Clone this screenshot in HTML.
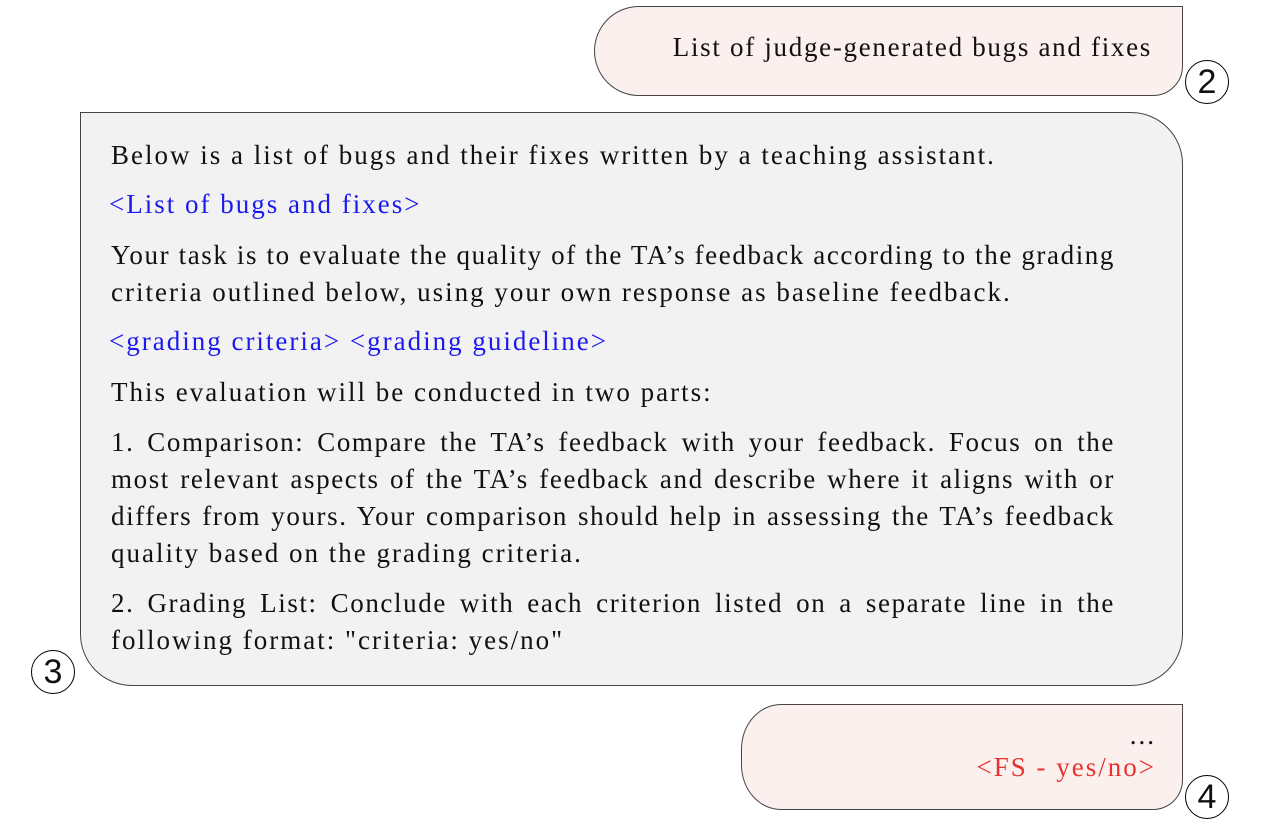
<!DOCTYPE html>
<html><head><meta charset="utf-8"><style>
body{margin:0;width:1280px;height:840px;background:#fff;font-family:"Liberation Serif",serif;color:#111;position:relative;overflow:hidden}
.b{position:absolute;border:1.3px solid #444;box-sizing:border-box}
.t{position:absolute;font-size:27px;letter-spacing:2px;line-height:37px;white-space:nowrap}
.l{display:block;white-space:nowrap}
.f{width:1004px;text-align:justify;text-align-last:justify;letter-spacing:1.6px}
.c{position:absolute;width:44px;height:44px;border:1.6px solid #000;border-radius:50%;box-sizing:border-box;text-align:center;font-size:34px;line-height:42px;font-family:"Liberation Sans Narrow","Liberation Sans",sans-serif}
.blue{color:#1a1aee}
</style></head><body>
<div class="b" style="left:594px;top:6px;width:589px;height:90px;background:#fcf0ef;border-radius:45px 0 30px 45px/45px 0 30px 45px"></div>
<div class="t" style="right:128px;top:29px;letter-spacing:1.7px">List of judge-generated bugs and fixes</div>
<div class="c" style="left:1185px;top:60px">2</div>

<div class="b" style="left:80px;top:112px;width:1103px;height:574px;background:#f2f2f2;border-radius:0 52px 52px 52px"></div>
<div class="t" style="left:111px;top:137px">Below is a list of bugs and their fixes written by a teaching assistant.</div>
<div class="t blue" style="left:109px;top:186px">&lt;List of bugs and fixes&gt;</div>
<div class="t" style="left:111px;top:237px"><span class="l f">Your task is to evaluate the quality of the TA’s feedback according to the grading</span><span class="l">criteria outlined below, using your own response as baseline feedback.</span></div>
<div class="t blue" style="left:109px;top:323px">&lt;grading criteria&gt; &lt;grading guideline&gt;</div>
<div class="t" style="left:111px;top:374px">This evaluation will be conducted in two parts:</div>
<div class="t" style="left:111px;top:424px"><span class="l f">1. Comparison: Compare the TA’s feedback with your feedback. Focus on the</span><span class="l f">most relevant aspects of the TA’s feedback and describe where it aligns with or</span><span class="l f">differs from yours. Your comparison should help in assessing the TA’s feedback</span><span class="l">quality based on the grading criteria.</span></div>
<div class="t" style="left:111px;top:585px"><span class="l f">2. Grading List: Conclude with each criterion listed on a separate line in the</span><span class="l">following format: "criteria: yes/no"</span></div>
<div class="c" style="left:31px;top:650px">3</div>

<div class="b" style="left:741px;top:704px;width:442px;height:106px;background:#fcf0ef;border-radius:40px 0 30px 40px/45px 0 30px 45px"></div>
<div class="t" style="right:124px;top:717px">...</div>
<div class="t" style="right:124px;top:749px;color:#e8322e">&lt;FS - yes/no&gt;</div>
<div class="c" style="left:1185px;top:775px">4</div>
</body></html>
